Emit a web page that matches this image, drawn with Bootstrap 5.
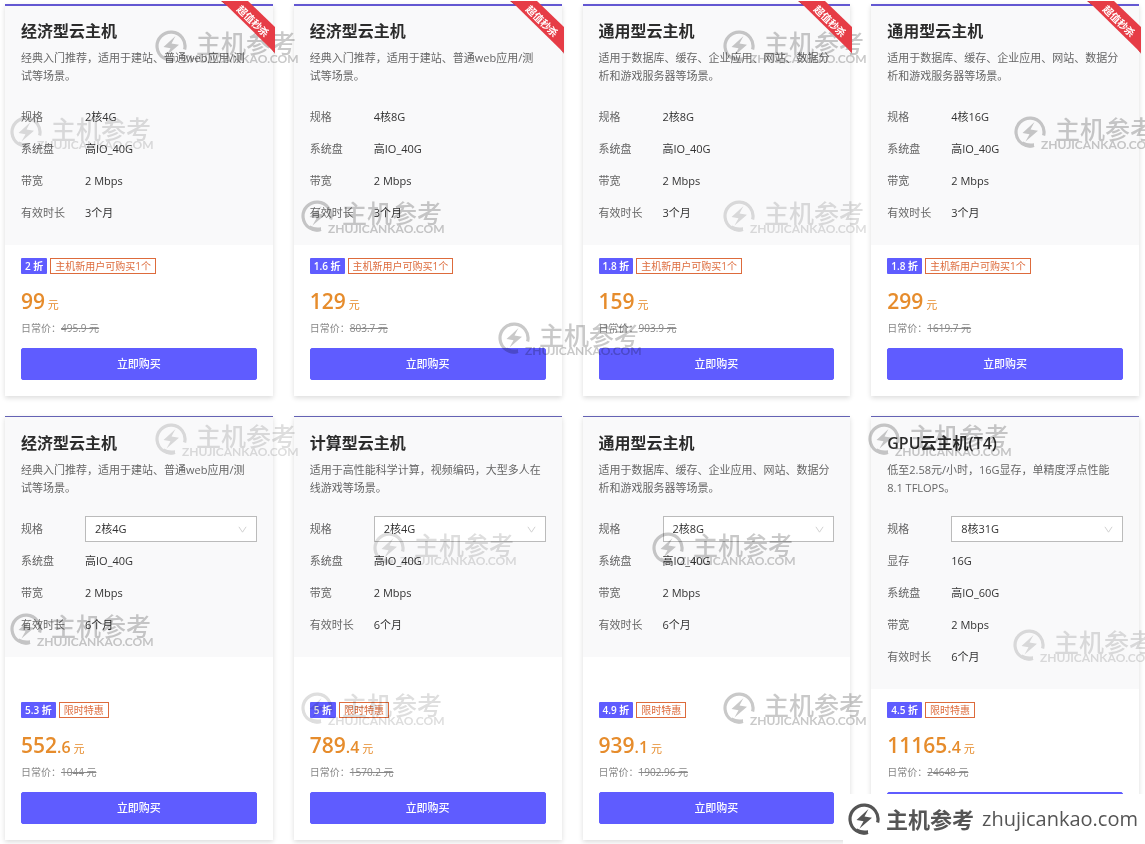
<!DOCTYPE html>
<html lang="zh-CN">
<head>
<meta charset="utf-8">
<meta name="viewport" content="width=device-width, initial-scale=1">
<title>云主机特惠</title>
<link href="https://cdn.jsdelivr.net/npm/bootstrap@5.3.0/dist/css/bootstrap.min.css" rel="stylesheet">
<style>
  :root { --brand: #5f5cff; --sale: #e68c2c; --tag: #dd6b3c; }
  body { font-family: "Open Sans", "Noto Sans CJK SC", sans-serif; font-size: 11px; line-height: 18px; color: #333; background: #fff; }
  .page { padding: 4px 6px 4px 5px; overflow: hidden; }
  .plans { --bs-gutter-x: 21px; --bs-gutter-y: 20px; }
  .plan { border: 0; border-top: 1px solid #6462b4; border-radius: 0; box-shadow: 0 2px 5px rgba(0,0,0,.14); }
  .plan-hot { border-top: 2px solid #6358d2; }
  .plan-head { background: #f9f9fa; padding: 14px 16px 16px; }
  .plan-hot .plan-head { padding-top: 13px; }
  .plan-title { font-size: 16px; line-height: 24px; font-weight: 700; margin-bottom: 6px; color: #2b2b2b; }
  .plan-title-thin { font-weight: 600; }
  .plan-desc { color: #666; margin-bottom: 16px; white-space: nowrap; }
  .spec { height: 32px; }
  .spec-name { flex: 0 0 64px; color: #666; font-weight: 400; }
  .spec .form-select { height: 26px; padding: 0 24px 0 9px; border: 1px solid #bbb; border-radius: 0; font-size: 11px; line-height: 18px; color: #333; background-color: #fff; background-size: 9px 9px; background-position: right 9px center;
    background-image: url("data:image/svg+xml,%3csvg xmlns='http://www.w3.org/2000/svg' viewBox='0 0 10 10'%3e%3cpath fill='none' stroke='%23cccccc' d='M1 2l4 6 4-6'/%3e%3c/svg%3e"); }
  .plan-foot { padding: 13px 16px 16px; }
  .tags { gap: 3px; }
  .tag { height: 16px; font-size: 10px; line-height: 16px; padding: 0 4px; white-space: nowrap; }
  .tag-off { background: var(--brand); color: #fff; font-weight: 600; border-radius: 1px; }
  .tag-note { border: 1px solid var(--tag); color: var(--tag); line-height: 14px; }
  .price { font-size: 21px; line-height: 28px; height: 28px; font-weight: 600; color: var(--sale); margin: 13px 0 5px; }
  .price-cents { font-size: 16px; }
  .price-unit { font-size: 11px; font-weight: 400; }
  .usual { font-size: 10px; line-height: 16px; height: 16px; color: #888; margin-bottom: 12px; }
  .btn-buy { --bs-btn-bg: var(--brand); --bs-btn-border-color: var(--brand); --bs-btn-color: #fff; --bs-btn-hover-bg: #4e4be8; --bs-btn-hover-color: #fff; height: 32px; padding: 0; font-size: 11px; font-weight: 500; line-height: 18px; border-radius: 2px; }
  .ribbon { top: -5px; right: -2px; z-index: 2; }
  .ribbon-text { font-size: 10px; font-weight: 700; fill: #fff; }

  .stamps { inset: 0; overflow: hidden; pointer-events: none; z-index: 1; mix-blend-mode: multiply; }
  .stamp { position: absolute; width: 148px; height: 36px; overflow: visible; color: #c9c9c9; }
  .stamp-faint { color: #dedede; }
  .stamp-zh { font-size: 25px; font-weight: 500; fill: currentColor; }
  .stamp-en { font-family: Lato, sans-serif; font-size: 12px; font-weight: 700; fill: currentColor; }
  .at-1 { left: 155px; top: 30px; }   .at-2 { left: 10px; top: 116px; }
  .at-3 { left: 301px; top: 200px; }  .at-4 { left: 723px; top: 30px; }
  .at-5 { left: 1014px; top: 116px; } .at-6 { left: 723px; top: 200px; }
  .at-7 { left: 498px; top: 322px; }  .at-8 { left: 155px; top: 423px; }
  .at-9 { left: 868px; top: 423px; }  .at-10 { left: 10px; top: 613px; }
  .at-11 { left: 373px; top: 532px; } .at-12 { left: 652px; top: 532px; }
  .at-13 { left: 301px; top: 692px; } .at-14 { left: 723px; top: 692px; }
  .at-15 { left: 1013px; top: 629px; }

  .site-tag { right: 0; bottom: 0; height: 50px; padding: 0 7px 0 5px; background: #fff; color: #555; z-index: 3; text-decoration: none; white-space: nowrap; }
  .site-zh { font-size: 22px; line-height: 32px; font-weight: 700; margin: 0 8px 0 6px; }
  .site-en { font-size: 20px; line-height: 32px; }
</style>
</head>
<body>
<svg class="position-absolute" width="0" height="0" aria-hidden="true">
  <symbol id="bolt" viewBox="0 0 32 32">
    <path d="M20 29.5A14 14 0 1 1 29.6 19.5" fill="none" stroke="currentColor" stroke-width="3.2"/>
    <path d="M20 27.2Q14 28.500 9 25.500L7.500 28.500Q13 32.500 20 31z" fill="currentColor"/>
    <path d="M20.500 6L8.500 17l7 1.200L11.500 25.500 24 14.800l-7.500-1.300z" fill="currentColor"/>
  </symbol>
  <symbol id="stamp" viewBox="0 0 148 36">
    <use href="#bolt" width="32" height="32"/>
    <text class="stamp-zh" x="41" y="23">主机参考</text>
    <text class="stamp-en" x="27" y="33">ZHUJICANKAO.COM</text>
  </symbol>
  <symbol id="ribbon" viewBox="0 0 54 54">
    <path d="M0 0H8V4H5zM54 53L50 47V40z" fill="#a92531"/>
    <path d="M1 0H27L54 26V52z" fill="#e63c46"/>
    <text class="ribbon-text" x="15" y="9" transform="rotate(44 15 9)">超值秒杀</text>
  </symbol>
</svg>

<main class="page position-relative">
  <div class="row row-cols-1 row-cols-md-2 row-cols-lg-4 plans">

    <div class="col"><article class="card h-100 plan plan-hot">
      <svg class="ribbon position-absolute" width="54" height="54"><use href="#ribbon"/></svg>
      <div class="plan-head">
        <h2 class="plan-title">经济型云主机</h2>
        <p class="plan-desc">经典入门推荐，适用于建站、普通web应用/测<br>试等场景。</p>
        <div class="spec d-flex align-items-center"><span class="spec-name">规格</span><span>2核4G</span></div>
        <div class="spec d-flex align-items-center"><span class="spec-name">系统盘</span><span>高IO_40G</span></div>
        <div class="spec d-flex align-items-center"><span class="spec-name">带宽</span><span>2 Mbps</span></div>
        <div class="spec d-flex align-items-center"><span class="spec-name">有效时长</span><span>3个月</span></div>
      </div>
      <div class="plan-foot mt-auto">
        <div class="d-flex tags"><span class="tag tag-off">2 折</span><span class="tag tag-note">主机新用户可购买1个</span></div>
        <div class="price">99<span class="price-unit"> 元</span></div>
        <div class="usual">日常价：<s>495.9 元</s></div>
        <button type="button" class="btn btn-buy w-100">立即购买</button>
      </div>
    </article></div>

    <div class="col"><article class="card h-100 plan plan-hot">
      <svg class="ribbon position-absolute" width="54" height="54"><use href="#ribbon"/></svg>
      <div class="plan-head">
        <h2 class="plan-title">经济型云主机</h2>
        <p class="plan-desc">经典入门推荐，适用于建站、普通web应用/测<br>试等场景。</p>
        <div class="spec d-flex align-items-center"><span class="spec-name">规格</span><span>4核8G</span></div>
        <div class="spec d-flex align-items-center"><span class="spec-name">系统盘</span><span>高IO_40G</span></div>
        <div class="spec d-flex align-items-center"><span class="spec-name">带宽</span><span>2 Mbps</span></div>
        <div class="spec d-flex align-items-center"><span class="spec-name">有效时长</span><span>3个月</span></div>
      </div>
      <div class="plan-foot mt-auto">
        <div class="d-flex tags"><span class="tag tag-off">1.6 折</span><span class="tag tag-note">主机新用户可购买1个</span></div>
        <div class="price">129<span class="price-unit"> 元</span></div>
        <div class="usual">日常价：<s>803.7 元</s></div>
        <button type="button" class="btn btn-buy w-100">立即购买</button>
      </div>
    </article></div>

    <div class="col"><article class="card h-100 plan plan-hot">
      <svg class="ribbon position-absolute" width="54" height="54"><use href="#ribbon"/></svg>
      <div class="plan-head">
        <h2 class="plan-title">通用型云主机</h2>
        <p class="plan-desc">适用于数据库、缓存、企业应用、网站、数据分<br>析和游戏服务器等场景。</p>
        <div class="spec d-flex align-items-center"><span class="spec-name">规格</span><span>2核8G</span></div>
        <div class="spec d-flex align-items-center"><span class="spec-name">系统盘</span><span>高IO_40G</span></div>
        <div class="spec d-flex align-items-center"><span class="spec-name">带宽</span><span>2 Mbps</span></div>
        <div class="spec d-flex align-items-center"><span class="spec-name">有效时长</span><span>3个月</span></div>
      </div>
      <div class="plan-foot mt-auto">
        <div class="d-flex tags"><span class="tag tag-off">1.8 折</span><span class="tag tag-note">主机新用户可购买1个</span></div>
        <div class="price">159<span class="price-unit"> 元</span></div>
        <div class="usual">日常价：<s>903.9 元</s></div>
        <button type="button" class="btn btn-buy w-100">立即购买</button>
      </div>
    </article></div>

    <div class="col"><article class="card h-100 plan plan-hot">
      <svg class="ribbon position-absolute" width="54" height="54"><use href="#ribbon"/></svg>
      <div class="plan-head">
        <h2 class="plan-title">通用型云主机</h2>
        <p class="plan-desc">适用于数据库、缓存、企业应用、网站、数据分<br>析和游戏服务器等场景。</p>
        <div class="spec d-flex align-items-center"><span class="spec-name">规格</span><span>4核16G</span></div>
        <div class="spec d-flex align-items-center"><span class="spec-name">系统盘</span><span>高IO_40G</span></div>
        <div class="spec d-flex align-items-center"><span class="spec-name">带宽</span><span>2 Mbps</span></div>
        <div class="spec d-flex align-items-center"><span class="spec-name">有效时长</span><span>3个月</span></div>
      </div>
      <div class="plan-foot mt-auto">
        <div class="d-flex tags"><span class="tag tag-off">1.8 折</span><span class="tag tag-note">主机新用户可购买1个</span></div>
        <div class="price">299<span class="price-unit"> 元</span></div>
        <div class="usual">日常价：<s>1619.7 元</s></div>
        <button type="button" class="btn btn-buy w-100">立即购买</button>
      </div>
    </article></div>

    <div class="col"><article class="card h-100 plan">
      <div class="plan-head">
        <h2 class="plan-title">经济型云主机</h2>
        <p class="plan-desc">经典入门推荐，适用于建站、普通web应用/测<br>试等场景。</p>
        <div class="spec d-flex align-items-center"><label class="spec-name" for="size-eco">规格</label><select class="form-select" id="size-eco"><option>2核4G</option></select></div>
        <div class="spec d-flex align-items-center"><span class="spec-name">系统盘</span><span>高IO_40G</span></div>
        <div class="spec d-flex align-items-center"><span class="spec-name">带宽</span><span>2 Mbps</span></div>
        <div class="spec d-flex align-items-center"><span class="spec-name">有效时长</span><span>6个月</span></div>
      </div>
      <div class="plan-foot mt-auto">
        <div class="d-flex tags"><span class="tag tag-off">5.3 折</span><span class="tag tag-note">限时特惠</span></div>
        <div class="price">552<span class="price-cents">.6</span><span class="price-unit"> 元</span></div>
        <div class="usual">日常价：<s>1044 元</s></div>
        <button type="button" class="btn btn-buy w-100">立即购买</button>
      </div>
    </article></div>

    <div class="col"><article class="card h-100 plan">
      <div class="plan-head">
        <h2 class="plan-title">计算型云主机</h2>
        <p class="plan-desc">适用于高性能科学计算，视频编码，大型多人在<br>线游戏等场景。</p>
        <div class="spec d-flex align-items-center"><label class="spec-name" for="size-compute">规格</label><select class="form-select" id="size-compute"><option>2核4G</option></select></div>
        <div class="spec d-flex align-items-center"><span class="spec-name">系统盘</span><span>高IO_40G</span></div>
        <div class="spec d-flex align-items-center"><span class="spec-name">带宽</span><span>2 Mbps</span></div>
        <div class="spec d-flex align-items-center"><span class="spec-name">有效时长</span><span>6个月</span></div>
      </div>
      <div class="plan-foot mt-auto">
        <div class="d-flex tags"><span class="tag tag-off">5 折</span><span class="tag tag-note">限时特惠</span></div>
        <div class="price">789<span class="price-cents">.4</span><span class="price-unit"> 元</span></div>
        <div class="usual">日常价：<s>1570.2 元</s></div>
        <button type="button" class="btn btn-buy w-100">立即购买</button>
      </div>
    </article></div>

    <div class="col"><article class="card h-100 plan">
      <div class="plan-head">
        <h2 class="plan-title">通用型云主机</h2>
        <p class="plan-desc">适用于数据库、缓存、企业应用、网站、数据分<br>析和游戏服务器等场景。</p>
        <div class="spec d-flex align-items-center"><label class="spec-name" for="size-general">规格</label><select class="form-select" id="size-general"><option>2核8G</option></select></div>
        <div class="spec d-flex align-items-center"><span class="spec-name">系统盘</span><span>高IO_40G</span></div>
        <div class="spec d-flex align-items-center"><span class="spec-name">带宽</span><span>2 Mbps</span></div>
        <div class="spec d-flex align-items-center"><span class="spec-name">有效时长</span><span>6个月</span></div>
      </div>
      <div class="plan-foot mt-auto">
        <div class="d-flex tags"><span class="tag tag-off">4.9 折</span><span class="tag tag-note">限时特惠</span></div>
        <div class="price">939<span class="price-cents">.1</span><span class="price-unit"> 元</span></div>
        <div class="usual">日常价：<s>1902.96 元</s></div>
        <button type="button" class="btn btn-buy w-100">立即购买</button>
      </div>
    </article></div>

    <div class="col"><article class="card h-100 plan">
      <div class="plan-head">
        <h2 class="plan-title plan-title-thin">GPU云主机(T4)</h2>
        <p class="plan-desc">低至2.58元/小时，16G显存，单精度浮点性能<br>8.1 TFLOPS。</p>
        <div class="spec d-flex align-items-center"><label class="spec-name" for="size-gpu">规格</label><select class="form-select" id="size-gpu"><option>8核31G</option></select></div>
        <div class="spec d-flex align-items-center"><span class="spec-name">显存</span><span>16G</span></div>
        <div class="spec d-flex align-items-center"><span class="spec-name">系统盘</span><span>高IO_60G</span></div>
        <div class="spec d-flex align-items-center"><span class="spec-name">带宽</span><span>2 Mbps</span></div>
        <div class="spec d-flex align-items-center"><span class="spec-name">有效时长</span><span>6个月</span></div>
      </div>
      <div class="plan-foot mt-auto">
        <div class="d-flex tags"><span class="tag tag-off">4.5 折</span><span class="tag tag-note">限时特惠</span></div>
        <div class="price">11165<span class="price-cents">.4</span><span class="price-unit"> 元</span></div>
        <div class="usual">日常价：<s>24648 元</s></div>
        <button type="button" class="btn btn-buy w-100" aria-label="立即购买"></button>
      </div>
    </article></div>
  </div>

  <div class="stamps position-absolute" aria-hidden="true">
    <svg class="stamp at-1"><use href="#stamp"/></svg>
    <svg class="stamp stamp-faint at-2"><use href="#stamp"/></svg>
    <svg class="stamp at-3"><use href="#stamp"/></svg>
    <svg class="stamp at-4"><use href="#stamp"/></svg>
    <svg class="stamp at-5"><use href="#stamp"/></svg>
    <svg class="stamp stamp-faint at-6"><use href="#stamp"/></svg>
    <svg class="stamp at-7"><use href="#stamp"/></svg>
    <svg class="stamp stamp-faint at-8"><use href="#stamp"/></svg>
    <svg class="stamp at-9"><use href="#stamp"/></svg>
    <svg class="stamp at-10"><use href="#stamp"/></svg>
    <svg class="stamp stamp-faint at-11"><use href="#stamp"/></svg>
    <svg class="stamp at-12"><use href="#stamp"/></svg>
    <svg class="stamp stamp-faint at-13"><use href="#stamp"/></svg>
    <svg class="stamp at-14"><use href="#stamp"/></svg>
    <svg class="stamp stamp-faint at-15"><use href="#stamp"/></svg>
  </div>

  <a class="site-tag position-absolute d-flex align-items-center" href="#">
    <svg width="32" height="32" aria-hidden="true"><use href="#bolt"/></svg>
    <span class="site-zh">主机参考</span><span class="site-en">zhujicankao.com</span>
  </a>
</main>
<script src="https://cdn.jsdelivr.net/npm/bootstrap@5.3.0/dist/js/bootstrap.bundle.min.js"></script>
</body>
</html>
